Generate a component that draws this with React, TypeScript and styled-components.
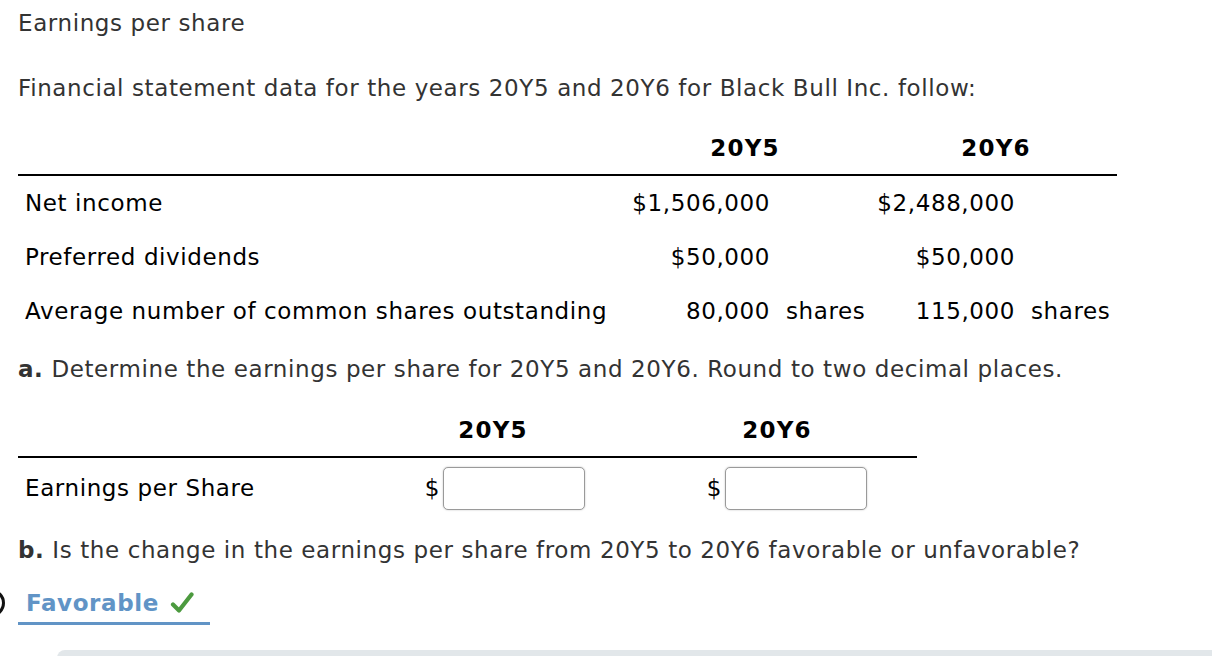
import styled, { createGlobalStyle } from "styled-components";

const GlobalStyle = createGlobalStyle`
    html, body {
        margin: 0;
        padding: 0;
        background: #fff;
        overflow-x: hidden;
    }
    body {
        font-family: "DejaVu Sans", Verdana, sans-serif;
        font-size: 23px;
        letter-spacing: 0.6px;
        color: #333;
    }
`

const Page = styled.div`
    padding: 8px 0 0 18px;
`

const Title = styled.h2`
    margin: 0;
    font-size: 23px;
    font-weight: normal;
    line-height: 30px;
    color: #333;
`

const Para = styled.p<{ $gap: number }>`
    margin: ${p => p.$gap}px 0 0;
    line-height: 30px;
    color: #333;

    b {
        font-weight: bold;
    }
`

const DataTable = styled.div<{ $cols: string; $width: number; $gap: number }>`
    display: grid;
    grid-template-columns: ${p => p.$cols};
    width: ${p => p.$width}px;
    margin-top: ${p => p.$gap}px;
    color: #000;
`

const HeadCell = styled.div<{ $span?: number }>`
    grid-column: span ${p => p.$span ?? 1};
    height: 53px;
    display: flex;
    align-items: center;
    justify-content: center;
    font-weight: bold;
    letter-spacing: 1.2px;
    border-bottom: 2px solid #000;
`

const HeadBlank = styled(HeadCell)`
    justify-content: flex-start;
`

const Cell = styled.div<{ $align?: string; $h?: number; $pad?: string }>`
    height: ${p => p.$h ?? 54}px;
    display: flex;
    align-items: center;
    justify-content: ${p => p.$align ?? "flex-start"};
    padding: ${p => p.$pad ?? "0"};
    box-sizing: border-box;
    white-space: nowrap;
`

const Money = styled.span`
    margin-right: 3px;
`

const AnswerInput = styled.input`
    width: 142px;
    height: 43px;
    box-sizing: border-box;
    border: 1.5px solid #9a9a9a;
    border-radius: 5px;
    box-shadow: 0 0 2px rgba(0, 0, 0, 0.25);
    background: #fff;
    font: inherit;
    padding: 0 6px;
`

const ChoiceRow = styled.div`
    display: flex;
    align-items: center;
    margin-top: 23px;
`

const Radio = styled.span`
    width: 28px;
    height: 28px;
    box-sizing: border-box;
    border: 3px solid #111;
    border-radius: 50%;
    margin-left: -41px;
    margin-right: 13px;
    margin-bottom: 7px;
    flex: none;
`

const Chosen = styled.div`
    width: 192px;
    box-sizing: border-box;
    padding: 0 0 4px 8px;
    border-bottom: 3px solid #6194c6;
    display: flex;
    align-items: center;
    gap: 11px;
    line-height: 30px;
    font-weight: bold;
    color: #6194c6;
`

const Panel = styled.div`
    margin: 25px 0 0 39px;
    height: 60px;
    background: #e2e7ea;
    border-radius: 8px 0 0 0;
`

const Check = () => (
    <svg width="24" height="24" viewBox="0 0 24 24">
        <path d="M3 13.5 L9 19.5 L21.5 3.5" fill="none" stroke="#4c9a3f" strokeWidth="4.2" strokeLinecap="round" strokeLinejoin="round" />
    </svg>
)

const rows = [
    { label: "Net income", y5: "$1,506,000", y6: "$2,488,000", unit: "" },
    { label: "Preferred dividends", y5: "$50,000", y6: "$50,000", unit: "" },
    { label: "Average number of common shares outstanding", y5: "80,000", y6: "115,000", unit: "shares" },
]

export const App = () => {
    return (
        <>
            <GlobalStyle />
            <Page>
                <Title>Earnings per share</Title>
                <Para $gap={35}>Financial statement data for the years 20Y5 and 20Y6 for Black Bull Inc. follow:</Para>

                <DataTable $cols="597px 163px 97px 148px 94px" $width={1099} $gap={18}>
                    <HeadBlank />
                    <HeadCell $span={2}>20Y5</HeadCell>
                    <HeadCell $span={2}>20Y6</HeadCell>
                    {rows.map(r => (
                        <>
                            <Cell $pad="0 0 0 7px">{r.label}</Cell>
                            <Cell $align="flex-end" $pad="0 8px 0 0">{r.y5}</Cell>
                            <Cell $pad="0 0 0 8px">{r.unit}</Cell>
                            <Cell $align="flex-end" $pad="0 8px 0 0">{r.y6}</Cell>
                            <Cell $pad="0 0 0 8px">{r.unit}</Cell>
                        </>
                    ))}
                </DataTable>

                <Para $gap={16}><b>a.</b> Determine the earnings per share for 20Y5 and 20Y6. Round to two decimal places.</Para>

                <DataTable $cols="382px 186px 98px 186px 47px" $width={899} $gap={19}>
                    <HeadBlank />
                    <HeadCell>20Y5</HeadCell>
                    <HeadBlank />
                    <HeadCell>20Y6</HeadCell>
                    <HeadBlank />
                    <Cell $h={60} $pad="0 0 0 7px">Earnings per Share</Cell>
                    <Cell $h={60} $align="flex-end" $pad="0 1px 0 0">
                        <Money>$</Money>
                        <AnswerInput type="text" />
                    </Cell>
                    <Cell $h={60} />
                    <Cell $h={60} $align="flex-end" $pad="0 3px 0 0">
                        <Money>$</Money>
                        <AnswerInput type="text" />
                    </Cell>
                    <Cell $h={60} />
                </DataTable>

                <Para $gap={17}><b>b.</b> Is the change in the earnings per share from 20Y5 to 20Y6 favorable or unfavorable?</Para>

                <ChoiceRow>
                    <Radio />
                    <Chosen>
                        Favorable
                        <Check />
                    </Chosen>
                </ChoiceRow>

                <Panel />
            </Page>
        </>
    )
}

export default App;
